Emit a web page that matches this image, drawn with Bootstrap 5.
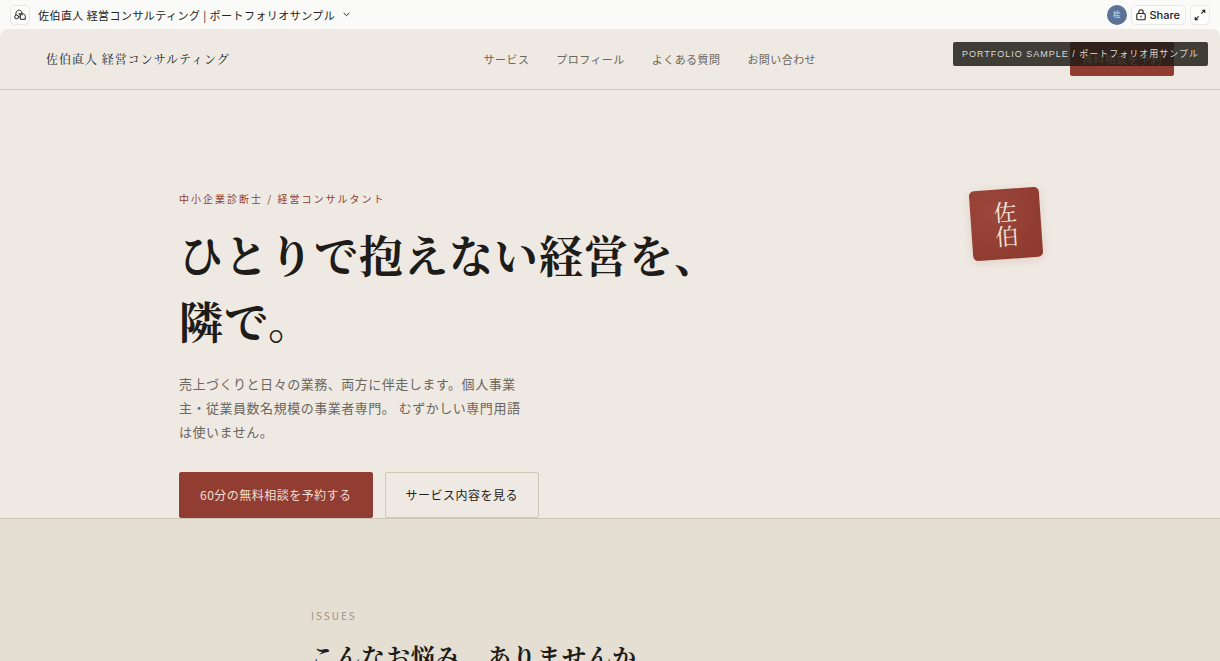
<!DOCTYPE html>
<html lang="ja">
<head>
<meta charset="utf-8">
<meta name="viewport" content="width=device-width, initial-scale=1">
<title>佐伯直人 経営コンサルティング | ポートフォリオサンプル</title>
<link href="https://cdn.jsdelivr.net/npm/bootstrap@5.3.0/dist/css/bootstrap.min.css" rel="stylesheet">
<style>
  :root {
    --ink: #1e1c18;
    --ink-soft: #6b665e;
    --paper: #eee9e2;
    --sand: #e5dfd3;
    --rule: #cfc8b8;
    --brick: #913d32;
    --sans: "Noto Sans CJK JP", "Liberation Sans", sans-serif;
    --serif: "Noto Serif CJK JP", "Noto Serif JP", "Liberation Serif", "Noto Sans CJK JP", serif;
  }
  body { background: #fafaf8; color: var(--ink); font-family: var(--sans); font-size: 12px; overflow-x: hidden; }
  .tracked { letter-spacing: .04em; }
  .serif { font-family: var(--serif); }

  .viewer-bar { height: 29px; padding: 0 10px; }
  .chip { height: 20px; border: 1px solid #e8e8e5; border-radius: 5px; background: #fdfdfc; color: #222; padding: 0; }
  .chip-icon { width: 20px; }
  .chip-share { font: 500 11px/18px Inter, sans-serif; padding: 0 5px 0 4px; }
  .doc-title { border: 0; background: none; padding: 0; color: #222; font-size: 11px; line-height: 20px; }
  .avatar { width: 20px; height: 20px; background: #5b7299; color: #dfe6f0; font-size: 7px; }

  .site { background: var(--paper); border-radius: 8px 8px 0 0; position: relative; }
  .site-header { height: 61px; padding: 0 46px; border-bottom: 1px solid var(--rule); }
  .site-header nav { gap: 27px; }
  .brand { font-size: 12px; letter-spacing: .08em; color: var(--ink); text-decoration: none; }
  .site-header nav a { font-size: 11px; color: var(--ink-soft); text-decoration: none; }

  .btn-site { --bs-btn-border-radius: 2px; --bs-btn-font-size: 12px; --bs-btn-line-height: 18px; --bs-btn-padding-x: 20px; --bs-btn-padding-y: 13px; }
  .btn-brick { --bs-btn-bg: var(--brick); --bs-btn-color: #f3dfd5; --bs-btn-border-color: var(--brick); --bs-btn-hover-bg: #7d3329; --bs-btn-hover-color: #fff; }
  .btn-line { --bs-btn-color: var(--ink); --bs-btn-border-color: var(--rule); --bs-btn-hover-bg: var(--sand); }
  .btn-small { --bs-btn-font-size: 11px; --bs-btn-padding-x: 11px; --bs-btn-padding-y: 7px; }
  .sample-note { position: absolute; top: 13px; right: 12px; padding: 0 9px; border-radius: 2px; background: rgba(30, 28, 22, .84); color: #dedad2; font-family: "Liberation Sans", "Noto Sans CJK JP", sans-serif; font-size: 9px; line-height: 24px; letter-spacing: 1px; z-index: 2; }

  .hero { border-bottom: 1px solid var(--rule); padding-top: 99px; }
  .hero-inner { width: 862px; max-width: 90%; }
  .eyebrow { font-size: 10px; line-height: 20px; letter-spacing: 2px; color: var(--brick); }
  .hero h1 { font-size: 44px; line-height: 66px; font-weight: 700; letter-spacing: 1px; margin: 12px 0 19px; }
  .lead-text { font-size: 13px; line-height: 24px; color: var(--ink-soft); max-width: 344px; margin-bottom: 28px; }
  .seal { width: 70px; height: 70px; border-radius: 5px; background: radial-gradient(circle at 30% 30%, #9c473b, #8b382d); color: #f6e6da; transform: rotate(-4deg); font-size: 23px; line-height: 24px; box-shadow: 0 2px 8px rgba(145, 61, 50, .15); }

  .issues { background: var(--sand); padding: 87px 0 80px; }
  .issues-inner { width: 598px; max-width: 90%; }
  .section-label { font-size: 10px; line-height: 20px; letter-spacing: 2px; color: #9a9284; }
  .issues h2 { font-size: 24px; line-height: 40px; font-weight: 700; margin: 10px 0 0; }
</style>
</head>
<body>
<div class="viewer-bar d-flex align-items-center justify-content-between">
  <div class="d-flex align-items-center gap-2">
    <button class="chip chip-icon d-flex align-items-center justify-content-center" aria-label="ホーム">
      <svg width="12" height="12" viewBox="0 0 12 12" fill="none" stroke="currentColor"><circle cx="2.600" cy="8" r="1.900"/><path d="M1.900 6V4.800C1.900 0 8 .3 8 4V6.500M4.500 8H6.200M5.300 4V6.200"/><path d="M6.300 10.300V4.800H8.500C10.300 4.800 11.300 6 11.300 7.500V10.300Z"/></svg>
    </button>
    <button class="doc-title tracked d-flex align-items-center gap-2">佐伯直人 経営コンサルティング | ポートフォリオサンプル
      <svg width="7" height="5" viewBox="0 0 7 5" fill="none" stroke="currentColor"><path d="M.7 1 3.500 3.700 6.300 1"/></svg>
    </button>
  </div>
  <div class="d-flex align-items-center gap-1">
    <span class="avatar rounded-circle d-flex align-items-center justify-content-center">桧</span>
    <button class="chip chip-share d-flex align-items-center gap-1">
      <svg width="10" height="12" viewBox="0 0 10 12" fill="none" stroke="currentColor" stroke-width="1.100"><rect x=".8" y="4.500" width="8.400" height="6.200" rx="1"/><path d="M2.800 4.500V3a2.200 2.200 0 0 1 4.400 0v1.500M5 6.800v1.700"/></svg>
      Share
    </button>
    <button class="chip chip-icon d-flex align-items-center justify-content-center" aria-label="全画面">
      <svg width="12" height="12" viewBox="0 0 12 12" fill="none" stroke="currentColor" stroke-width="1.100"><path d="M8 1.200H10.800V4M10.800 1.200 7.300 4.700M4 10.800H1.200V8M1.200 10.800 4.700 7.300"/></svg>
    </button>
  </div>
</div>

<div class="site">
  <div class="sample-note">PORTFOLIO SAMPLE / ポートフォリオ用サンプル</div>
  <header class="site-header d-flex align-items-center justify-content-between">
    <a class="brand serif" href="#">佐伯直人 経営コンサルティング</a>
    <nav class="d-flex" aria-label="メイン">
      <a class="tracked" href="#services">サービス</a>
      <a class="tracked" href="#profile">プロフィール</a>
      <a class="tracked" href="#faq">よくある質問</a>
      <a class="tracked" href="#contact">お問い合わせ</a>
    </nav>
    <button class="btn btn-site btn-brick btn-small tracked">無料相談を予約</button>
  </header>

  <main>
    <section class="hero">
      <div class="hero-inner mx-auto d-flex justify-content-between align-items-start">
        <div>
          <div class="eyebrow">中小企業診断士 / 経営コンサルタント</div>
          <h1 class="serif">ひとりで抱えない経営を、<br>隣で。</h1>
          <p class="lead-text tracked">売上づくりと日々の業務、両方に伴走します。個人事業主・従業員数名規模の事業者専門。 むずかしい専門用語は使いません。</p>
          <div class="d-flex flex-wrap">
            <button class="btn btn-site btn-brick tracked me-2">60分の無料相談を予約する</button>
            <button class="btn btn-site btn-line tracked ms-1">サービス内容を見る</button>
          </div>
        </div>
        <div class="seal serif d-flex align-items-center justify-content-center flex-shrink-0"><span>佐<br>伯</span></div>
      </div>
    </section>

    <section class="issues">
      <div class="issues-inner mx-auto">
        <div class="section-label">ISSUES</div>
        <h2 class="serif tracked">こんなお悩み、ありませんか</h2>
      </div>
    </section>
  </main>
</div>
<script src="https://cdn.jsdelivr.net/npm/bootstrap@5.3.0/dist/js/bootstrap.bundle.min.js"></script>
</body>
</html>
